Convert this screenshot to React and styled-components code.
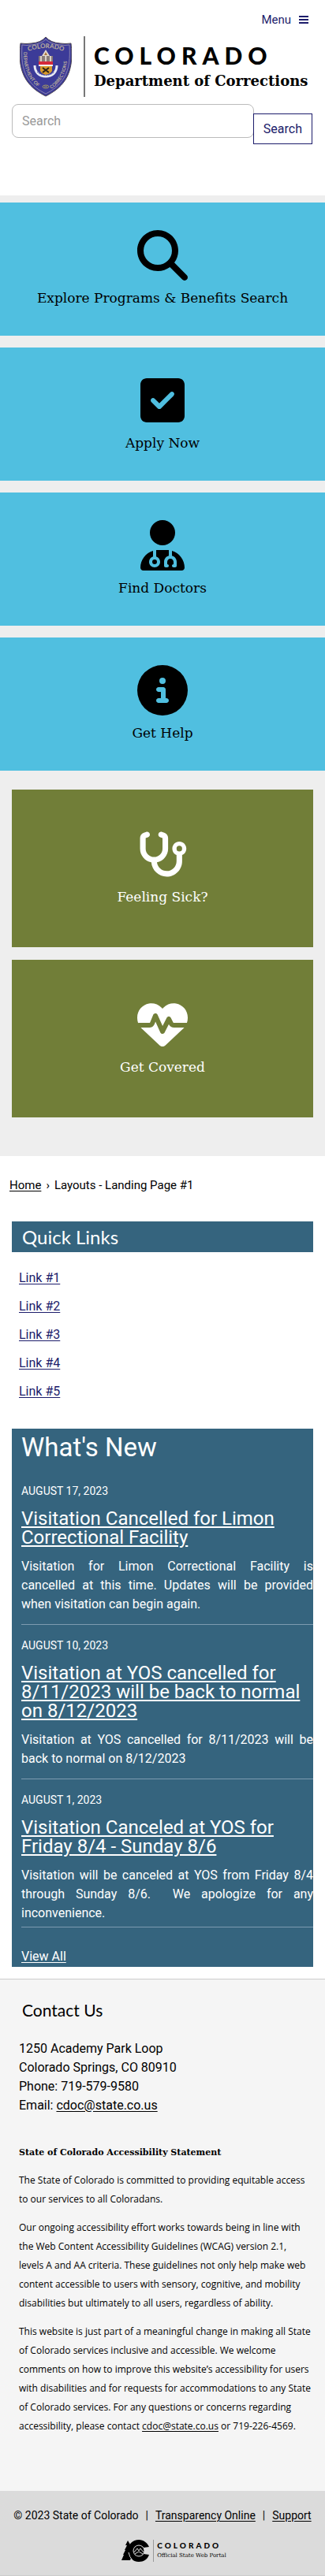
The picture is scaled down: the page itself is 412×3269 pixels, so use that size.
import React from 'react';
import styled, { createGlobalStyle } from 'styled-components';
import {
  FaMagnifyingGlass,
  FaSquareCheck,
  FaUserDoctor,
  FaCircleInfo,
  FaStethoscope,
  FaHeartPulse,
} from 'react-icons/fa6';

const navy = '#1c1c6b';
const steel = '#35647e';
const slab = '"DejaVu Serif", serif';
const geometric = 'Lato, "Open Sans", sans-serif';

const GlobalStyle = createGlobalStyle`
  * { box-sizing: border-box; }
  body {
    margin: 0;
    background: #fff;
    color: #000;
    font-family: Roboto, "Open Sans", sans-serif;
    font-size: 16px;
    line-height: 24px;
  }
  h1, h2, h3, p, ul, ol, address { margin: 0; padding: 0; font-weight: 400; font-style: normal; }
  ul, ol { list-style: none; }
  a { color: inherit; text-underline-offset: 2px; }
`;

const Header = styled.header`
  padding: 13px 15px 65px;
`;

const MenuRow = styled.div`
  display: flex;
  justify-content: flex-end;
  padding-right: 6px;
`;

const MenuButton = styled.button`
  display: flex;
  align-items: center;
  gap: 10px;
  height: 24px;
  padding: 0;
  border: 0;
  background: none;
  color: ${navy};
  font: inherit;
  font-size: 15px;
`;

const Brand = styled.a`
  display: flex;
  margin: 9px 0;
  padding-left: 10px;
  color: #000;
  text-decoration: none;
`;

const BrandText = styled.span`
  display: flex;
  flex-direction: column;
  justify-content: center;
  gap: 5px;
  height: 77px;
  margin-left: 15px;
  padding-left: 11px;
  border-left: 2px solid #777;
  white-space: nowrap;
`;

const Wordmark = styled.span`
  font-family: ${geometric};
  font-weight: 900;
  font-size: ${(p) => (p.$small ? 10 : 30)}px;
  line-height: ${(p) => (p.$small ? 13 : 32)}px;
  letter-spacing: ${(p) => (p.$small ? 3 : 7)}px;
`;

const Agency = styled.span`
  font-family: ${slab};
  font-weight: 700;
  font-size: 18px;
  line-height: 24px;
`;

const SearchForm = styled.form`
  display: flex;
  align-items: flex-start;
`;

const SearchInput = styled.input`
  flex: 1;
  min-width: 0;
  height: 43px;
  padding: 0 12px;
  border: 1px solid #bbb;
  border-radius: 8px;
  background: #fff;
  font: inherit;
  &::placeholder { color: #999; opacity: 1; }
`;

const SearchButton = styled.button`
  height: 39px;
  margin: 12px 1px 0 -1px;
  padding: 0 12px;
  border: 1px solid ${navy};
  background: #fff;
  color: ${navy};
  font: inherit;
`;

const Features = styled.section`
  display: grid;
  gap: 24px;
  padding: 9px 0 49px;
  background: #eee;
`;

const CardStack = styled.div`
  display: grid;
  gap: ${(p) => (p.$inset ? 16 : 15)}px;
  padding: 0 ${(p) => (p.$inset ? 15 : 0)}px;
`;

const Card = styled.a`
  display: flex;
  flex-direction: column;
  align-items: center;
  justify-content: center;
  gap: 8px;
  min-height: ${(p) => (p.$green ? 200 : 169)}px;
  background: ${(p) => (p.$green ? '#717e38' : '#50bfe0')};
  color: ${(p) => (p.$green ? '#fff' : '#000')};
  font-family: ${slab};
  font-size: 17px;
  line-height: 28px;
  text-decoration: none;
  svg { height: 64px; width: auto; }
`;

const Breadcrumb = styled.nav`
  padding: 25px 12px 0;
  font-size: 15px;
  ol { display: flex; gap: 6px; }
`;

const Main = styled.main`
  padding: 34px 15px 15px;
`;

const SectionTitle = styled.h2`
  padding: 0 13px;
  background: ${steel};
  color: #fff;
  font-family: ${geometric};
  font-size: 24px;
  line-height: 39px;
`;

const LinkList = styled.ul`
  display: grid;
  gap: 12px;
  padding: 21px 9px 35px;
  color: ${navy};
`;

const News = styled.section`
  padding: 4px 0 1px 12px;
  background: ${steel};
  color: #fff;
`;

const NewsTitle = styled.h2`
  margin-bottom: 23px;
  font-size: 33px;
  line-height: 40px;
`;

const NewsItem = styled.article`
  padding-bottom: ${(p) => (p.$last ? 5 : 13)}px;
  margin-bottom: ${(p) => (p.$last ? 25 : 14)}px;
  border-bottom: 1px solid #7d9bb0;
`;

const NewsDate = styled.p`
  font-size: 14px;
`;

const NewsHeading = styled.h3`
  margin: 11px 0 13px;
  font-size: 24px;
  line-height: 24px;
`;

const NewsText = styled.p`
  text-align: justify;
`;

const Contact = styled.section`
  padding: 25px 18px 70px 24px;
  border-top: 1px solid #ccc;
  background: #f5f5f5;
`;

const ContactTitle = styled.h2`
  margin-bottom: 23px;
  padding-left: 4px;
  font-family: ${geometric};
  font-size: 21px;
  line-height: 28px;
`;

const Address = styled.address`
  margin-bottom: 36px;
`;

const StatementTitle = styled.h3`
  margin-bottom: 11px;
  font-family: ${slab};
  font-size: 11px;
  && { font-weight: 700; }
`;

const Statement = styled.div`
  display: grid;
  gap: 12px;
  font-family: "Open Sans", sans-serif;
  font-size: 12px;
`;

const Footer = styled.footer`
  display: flex;
  flex-direction: column;
  align-items: center;
  gap: 19px;
  padding: 19px 0 17px;
  border-bottom: 1px solid #ccc;
  background: #dbdbdb;
`;

const FooterLinks = styled.div`
  display: flex;
  gap: 9px;
  font-size: 14px;
  white-space: nowrap;
`;

const Portal = styled.a`
  display: flex;
  gap: 4px;
  margin-left: 29px;
  color: #000;
  text-decoration: none;
`;

const PortalText = styled.span`
  display: flex;
  flex-direction: column;
  height: 28px;
  padding: 1px 0 0 4px;
  border-left: 1px solid #999;
`;

const PortalTag = styled.span`
  font-family: ${slab};
  font-size: 7px;
  line-height: 12px;
`;

function MenuIcon() {
  return (
    <svg width="12" height="10" viewBox="0 0 12 10" fill="currentColor" aria-hidden="true">
      <path d="M0 0h12v2H0zM0 4h12v2H0zM0 8h12v2H0z" />
    </svg>
  );
}

function Shield() {
  return (
    <svg width="66" height="77" viewBox="0 0 66 77" role="img" aria-label="Colorado Department of Corrections seal">
      <defs>
        <path id="sealTop" d="M11 19 Q33 11 55 19" />
        <path id="sealLeft" d="M5 20 C4 42 12 58 27 67" />
        <path id="sealRight" d="M40 67 C54 58 62 42 60 19" />
      </defs>
      <path d="M33 1 Q27 8 15 9 Q8 10 1 9 C-1 27 0 42 8 55 C15 66 25 72 33 76 C41 72 51 66 58 55 C66 42 67 27 65 9 Q58 10 51 9 Q39 8 33 1z" fill="#3c3b98" stroke="#4c4450" strokeWidth="1" />
      <path d="M33 4 Q27 10 15 11 Q9 12 3 11 C2 28 3 41 10 53 C16 63 25 69 33 73 C41 69 50 63 56 53 C63 41 64 28 63 11 Q57 12 51 11 Q39 10 33 4z" fill="none" stroke="#8b84ae" strokeWidth="1" />
      <g fill="#b9ad9c" fontFamily="Lato, sans-serif" fontWeight="700">
        <text fontSize="8"><textPath href="#sealTop">COLORADO</textPath></text>
        <text fontSize="6"><textPath href="#sealLeft">DEPARTMENT OF</textPath></text>
        <text fontSize="6"><textPath href="#sealRight">CORRECTIONS</textPath></text>
      </g>
      <path d="M33 17l5 8H28z" fill="#e5dccf" />
      <path d="M33 20l2 4h-4z" fill="#a9753c" />
      <path d="M24 25h18v7H24z" fill="#8a7d79" />
      <path d="M27 25v7M33 25v7M39 25v7" stroke="#d8cfc6" strokeWidth="2" />
      <path d="M24 32h18v4H24z" fill="#d5293b" />
      <path d="M24 36h18v2H24z" fill="#f2f2f5" />
      <path d="M26 38h15v6q-2 4-8 5q-5-1-7-5z" fill="#d79a2b" />
      <path d="M29 40l8 6M37 40l-8 6" stroke="#2b2118" strokeWidth="2" />
      <path d="M19 37c0 9 6 14 14 14s14-5 14-14" fill="none" stroke="#e9eaf4" strokeWidth="3" />
      <path d="M22 45c5 6 17 6 22 0" fill="none" stroke="#5a63b4" strokeWidth="1" strokeDasharray="2 1" />
      <ellipse cx="33" cy="64" rx="4" ry="2" fill="none" stroke="#a39862" strokeWidth="1" />
      <path d="M31 64h4" stroke="#a39862" strokeWidth="1" />
    </svg>
  );
}

function PortalIcon() {
  return (
    <svg width="36" height="28" viewBox="0 0 36 28" aria-hidden="true">
      <path d="M8 1l3 5h-1l3 6h-1l2 6-3 8H0l3-7H2l3-6H4l3-6H5z" fill="#000" />
      <path d="M35 9C33 4 28 0 22 0a14 14 0 1 0 0 28c6 0 11-3 13-9l-7-1a7 7 0 1 1 0-8z" fill="#000" />
      <circle cx="22" cy="14" r="7" fill="#000" />
      <g fill="none" stroke="#dbdbdb" strokeWidth="1">
        <circle cx="22" cy="14" r="7" />
        <path d="M16 16l4-5 2 3 2-3 4 5M17 18l5-3 5 3M9 16q1 6 5 10" />
      </g>
    </svg>
  );
}

const services = [
  ['Explore Programs & Benefits Search', FaMagnifyingGlass],
  ['Apply Now', FaSquareCheck],
  ['Find Doctors', FaUserDoctor],
  ['Get Help', FaCircleInfo],
];

const care = [
  ['Feeling Sick?', FaStethoscope],
  ['Get Covered', FaHeartPulse],
];

const quickLinks = ['Link #1', 'Link #2', 'Link #3', 'Link #4', 'Link #5'];

const news = [
  {
    date: 'AUGUST 17, 2023',
    title: 'Visitation Cancelled for Limon Correctional Facility',
    text: 'Visitation for Limon Correctional Facility is cancelled at this time. Updates will be provided when visitation can begin again.',
  },
  {
    date: 'AUGUST 10, 2023',
    title: 'Visitation at YOS cancelled for 8/11/2023 will be back to normal on 8/12/2023',
    text: 'Visitation at YOS cancelled for 8/11/2023 will be back to normal on 8/12/2023',
  },
  {
    date: 'AUGUST 1, 2023',
    title: 'Visitation Canceled at YOS for Friday 8/4 - Sunday 8/6',
    text: 'Visitation will be canceled at YOS from Friday 8/4 through Sunday 8/6. \u00a0We apologize for any inconvenience.',
  },
];

export default function App() {
  return (
    <>
      <GlobalStyle />
      <Header>
        <MenuRow>
          <MenuButton type="button">
            Menu <MenuIcon />
          </MenuButton>
        </MenuRow>
        <Brand href="#home">
          <Shield />
          <BrandText>
            <Wordmark>COLORADO</Wordmark>
            <Agency>Department of Corrections</Agency>
          </BrandText>
        </Brand>
        <SearchForm role="search" onSubmit={(e) => e.preventDefault()}>
          <SearchInput type="search" placeholder="Search" aria-label="Search" />
          <SearchButton type="submit">Search</SearchButton>
        </SearchForm>
      </Header>

      <Features>
        <CardStack>
          {services.map(([label, Icon]) => (
            <Card key={label} href="#service">
              <Icon aria-hidden="true" />
              {label}
            </Card>
          ))}
        </CardStack>
        <CardStack $inset>
          {care.map(([label, Icon]) => (
            <Card key={label} href="#care" $green>
              <Icon aria-hidden="true" />
              {label}
            </Card>
          ))}
        </CardStack>
      </Features>

      <Breadcrumb aria-label="Breadcrumb">
        <ol>
          <li><a href="#home">Home</a></li>
          <li aria-hidden="true">›</li>
          <li>Layouts - Landing Page #1</li>
        </ol>
      </Breadcrumb>

      <Main>
        <SectionTitle>Quick Links</SectionTitle>
        <LinkList>
          {quickLinks.map((label) => (
            <li key={label}><a href="#link">{label}</a></li>
          ))}
        </LinkList>
        <News>
          <NewsTitle>What's New</NewsTitle>
          {news.map((item, i) => (
            <NewsItem key={item.date} $last={i === news.length - 1}>
              <NewsDate>{item.date}</NewsDate>
              <NewsHeading><a href="#news">{item.title}</a></NewsHeading>
              <NewsText>{item.text}</NewsText>
            </NewsItem>
          ))}
          <a href="#all-news">View All</a>
        </News>
      </Main>

      <Contact>
        <ContactTitle>Contact Us</ContactTitle>
        <Address>
          1250 Academy Park Loop<br />
          Colorado Springs, CO 80910<br />
          Phone: 719-579-9580<br />
          Email: <a href="mailto:cdoc@state.co.us">cdoc@state.co.us</a>
        </Address>
        <StatementTitle>State of Colorado Accessibility Statement</StatementTitle>
        <Statement>
          <p>The State of Colorado is committed to providing equitable access to our services to all Coloradans.</p>
          <p>
            Our ongoing accessibility effort works towards being in line with the Web Content Accessibility
            Guidelines (WCAG) version 2.1, levels A and AA criteria. These guidelines not only help make web
            content accessible to users with sensory, cognitive, and mobility disabilities but ultimately to
            all users, regardless of ability.
          </p>
          <p>
            This website is just part of a meaningful change in making all State of Colorado services
            inclusive and accessible. We welcome comments on how to improve this website’s accessibility for
            users with disabilities and for requests for accommodations to any State of Colorado services.
            For any questions or concerns regarding accessibility, please contact{' '}
            <a href="mailto:cdoc@state.co.us">cdoc@state.co.us</a> or 719-226-4569.
          </p>
        </Statement>
      </Contact>

      <Footer>
        <FooterLinks>
          <span>© 2023 State of Colorado</span>
          <span>|</span>
          <a href="#transparency">Transparency Online</a>
          <span>|</span>
          <a href="#support">Support</a>
        </FooterLinks>
        <Portal href="#portal">
          <PortalIcon />
          <PortalText>
            <Wordmark $small>COLORADO</Wordmark>
            <PortalTag>Official State Web Portal</PortalTag>
          </PortalText>
        </Portal>
      </Footer>
    </>
  );
}
